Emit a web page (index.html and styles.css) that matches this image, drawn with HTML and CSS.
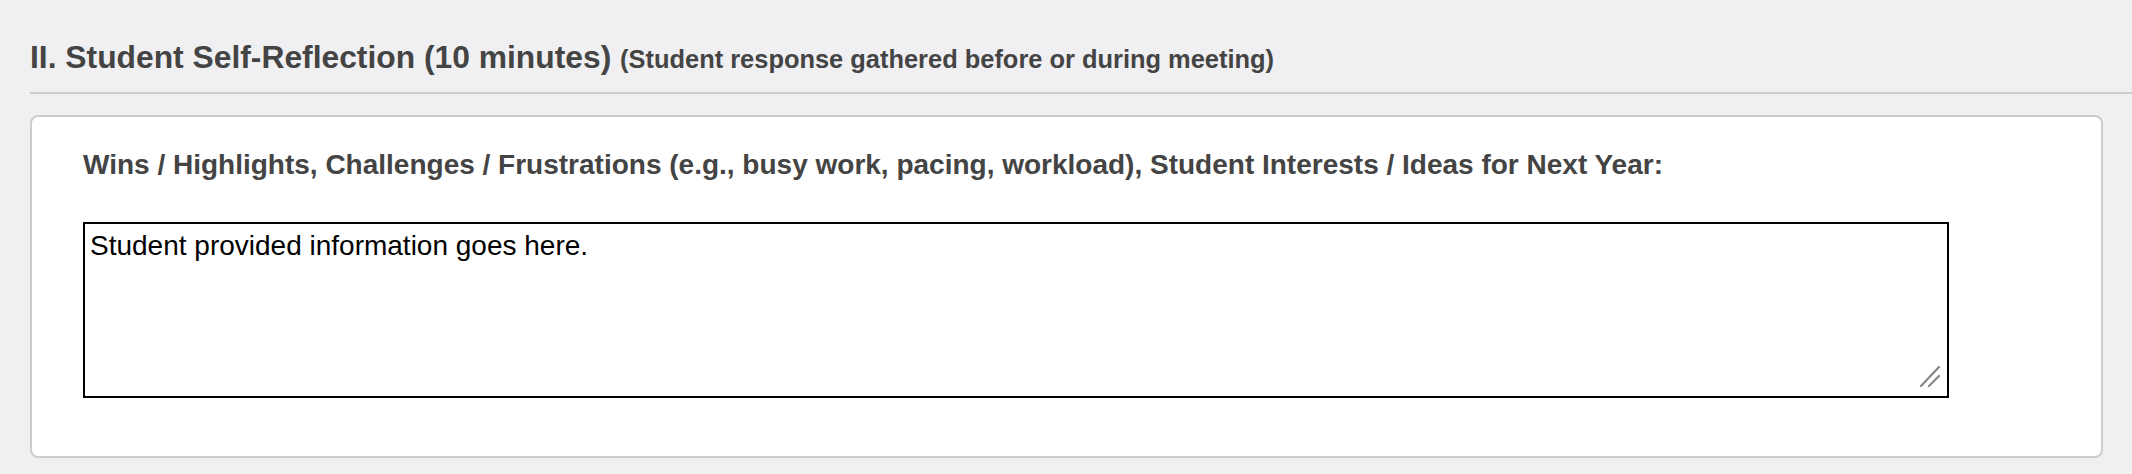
FILE: index.html
```html
<!DOCTYPE html>
<html lang="en">
<head>
    <meta charset="UTF-8">
    <meta name="viewport" content="width=device-width, initial-scale=1.0">
    <title>Student Self-Reflection</title>
    <link rel="stylesheet" href="styles.css">
</head>
<body>
    <div class="section">
        <h2 class="section-title">II. Student Self-Reflection (10 minutes) <span class="section-note">(Student response gathered before or during meeting)</span></h2>

        <div class="card">
            <label class="field-label" for="reflection">Wins / Highlights, Challenges / Frustrations (e.g., busy work, pacing, workload), Student Interests / Ideas for Next Year:</label>
            <div class="field-wrap">
                <textarea id="reflection" class="field-input">Student provided information goes here.</textarea>
                <!-- resize grip, drawn so it matches the big one from the screenshot -->
                <svg class="resize-grip" width="22" height="22" viewBox="0 0 22 22" aria-hidden="true">
                    <path d="M2 20 L20 1 M10 20 L20 10" stroke="#888888" stroke-width="2.2" stroke-linecap="round" fill="none"/>
                </svg>
            </div>
        </div>
    </div>
</body>
</html>
```

FILE: styles.css
```css
:root {
    --page-bg: #f0f0f2;
    --text-dark: #444444;
    --line-grey: #cccccc;
}

body, html {
    margin: 0;
    padding: 0;
    background: var(--page-bg);
    font-family: 'Liberation Sans', Arial, sans-serif;
}

.section {
    padding-left: 30px;
}

.section-title {
    margin: 0;
    padding-top: 39px;
    padding-bottom: 16px;
    font-size: 31.8px;
    font-weight: bold;
    color: var(--text-dark);
    border-bottom: 2px solid var(--line-grey);
}

.section-note {
    font-size: 0.8em;
}

.card {
    margin-top: 21px;
    margin-right: 29px;
    padding: 32px 152px 58px 51px;
    background: #ffffff;
    border: 2px solid var(--line-grey);
    border-radius: 8px;
}

.field-label {
    display: block;
    margin-bottom: 41px;
    font-size: 28px;
    font-weight: bold;
    color: var(--text-dark);
}

.field-wrap {
    position: relative;
}

.field-input {
    display: block;
    box-sizing: border-box;
    width: 100%;
    height: 176px;
    margin: 0;
    padding: 6px 5px;
    border: 2px solid #000000;
    border-radius: 0;
    font-family: 'Liberation Sans', Arial, sans-serif;
    font-size: 28px;
    color: #000000;
    background: #ffffff;
    outline: none;
    resize: none;
}

.resize-grip {
    position: absolute;
    right: 8px;
    bottom: 10px;
    pointer-events: none;
}
```
